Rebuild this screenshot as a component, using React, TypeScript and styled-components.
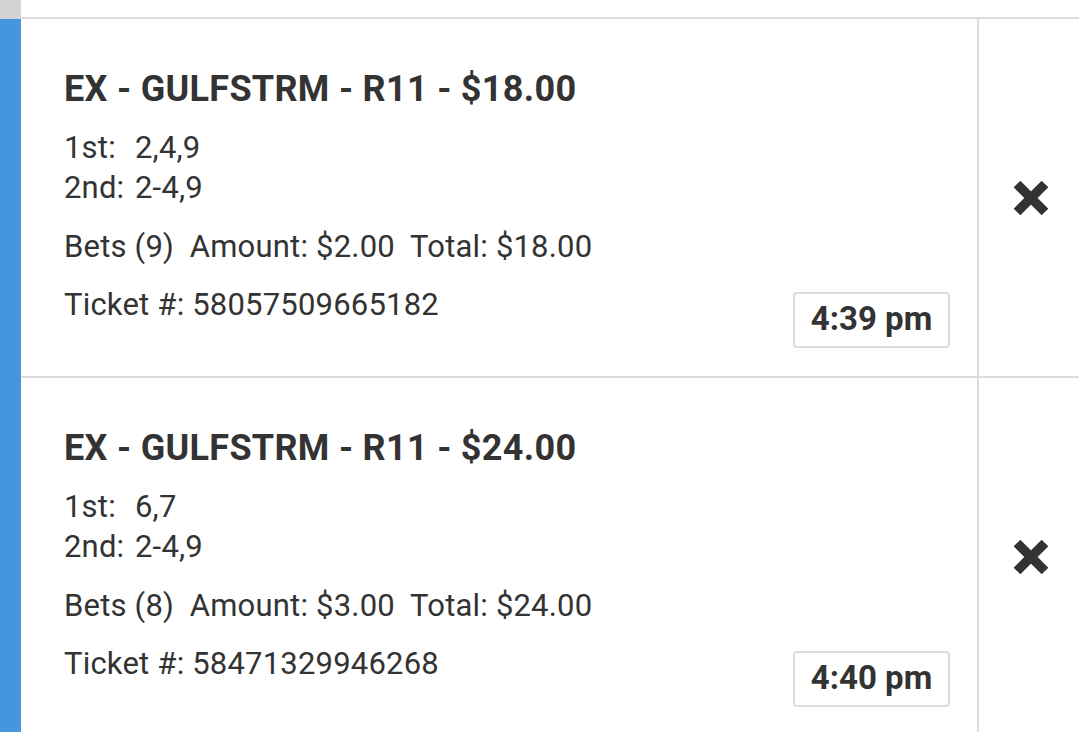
import React from 'react';
import styled, { createGlobalStyle } from 'styled-components';

interface Ticket {
  id: string;
  title: string;
  first: string;
  second: string;
  bets: number;
  amount: string;
  total: string;
  time: string;
}

const tickets: Ticket[] = [
  {
    id: '58057509665182',
    title: 'EX - GULFSTRM - R11 - $18.00',
    first: '2,4,9',
    second: '2-4,9',
    bets: 9,
    amount: '$2.00',
    total: '$18.00',
    time: '4:39 pm',
  },
  {
    id: '58471329946268',
    title: 'EX - GULFSTRM - R11 - $24.00',
    first: '6,7',
    second: '2-4,9',
    bets: 8,
    amount: '$3.00',
    total: '$24.00',
    time: '4:40 pm',
  },
];

const GlobalStyle = createGlobalStyle`
  html, body {
    margin: 0;
    padding: 0;
    background: #fff;
    overflow: hidden;
  }
  body {
    font-family: Roboto, "Liberation Sans", Arial, sans-serif;
    color: #333;
  }
`;

const List = styled.div`
  display: flex;
  flex-direction: column;
  width: 1079px;
`;

const Row = styled.div<{ $accent: string }>`
  display: flex;
  border-left: 21px solid ${props => props.$accent};
`;

const Stub = styled.div`
  flex: 1;
  height: 17px;
  border-bottom: 2px solid #ddd;
`;

const Body = styled.div`
  flex: 1;
  display: flex;
  border-bottom: 2px solid #ddd;
`;

const Main = styled.div`
  flex: 1;
  padding: 50px 27px 28px 43px;
`;

const Title = styled.h2`
  margin: 0 0 19px;
  font-size: 36px;
  line-height: 40px;
  letter-spacing: 0.3px;
  font-weight: 700;
  color: #333;
`;

const Line = styled.div<{ $gap?: number }>`
  display: flex;
  font-size: 31px;
  line-height: 40px;
  letter-spacing: 0.2px;
  margin-top: ${props => props.$gap ?? 0}px;
  white-space: pre;
`;

const Label = styled.span`
  width: 71px;
`;

const Footer = styled.div`
  display: flex;
  justify-content: space-between;
  align-items: flex-start;
  margin-top: 18px;
`;

const TimeBadge = styled.div`
  margin-top: 7px;
  width: 153px;
  height: 49px;
  padding-bottom: 3px;
  border: 2px solid #ddd;
  border-radius: 4px;
  display: flex;
  align-items: center;
  justify-content: center;
  font-size: 33px;
  font-weight: 700;
  color: #333;
`;

const Action = styled.div`
  width: 96px;
  padding-left: 4px;
  border-left: 2px solid #ddd;
  display: flex;
  align-items: center;
  justify-content: center;
`;

const RemoveButton = styled.button`
  border: 0;
  padding: 0;
  background: none;
  display: flex;
  cursor: pointer;
`;

const CloseIcon = () => (
  <svg width="36" height="36" viewBox="0 0 36 36">
    <path d="M4 4 L32 32 M32 4 L4 32" stroke="#333" strokeWidth="9.5" strokeLinecap="butt" />
  </svg>
);

const TicketCard: React.FC<{ ticket: Ticket }> = ({ ticket }) => (
  <Row $accent="#4596dc">
    <Body>
      <Main>
        <Title>{ticket.title}</Title>
        <Line>
          <Label>1st:</Label>
          <span>{ticket.first}</span>
        </Line>
        <Line>
          <Label>2nd:</Label>
          <span>{ticket.second}</span>
        </Line>
        <Line $gap={19}>
          {`Bets (${ticket.bets})  Amount: ${ticket.amount}  Total: ${ticket.total}`}
        </Line>
        <Footer>
          <Line>{`Ticket #: ${ticket.id}`}</Line>
          <TimeBadge>{ticket.time}</TimeBadge>
        </Footer>
      </Main>
      <Action>
        <RemoveButton aria-label="Remove ticket">
          <CloseIcon />
        </RemoveButton>
      </Action>
    </Body>
  </Row>
);

export default function App() {
  return (
    <>
      <GlobalStyle />
      <List>
        <Row $accent="#d3d3d3">
          <Stub />
        </Row>
        {tickets.map(t => (
          <TicketCard key={t.id} ticket={t} />
        ))}
      </List>
    </>
  );
}
